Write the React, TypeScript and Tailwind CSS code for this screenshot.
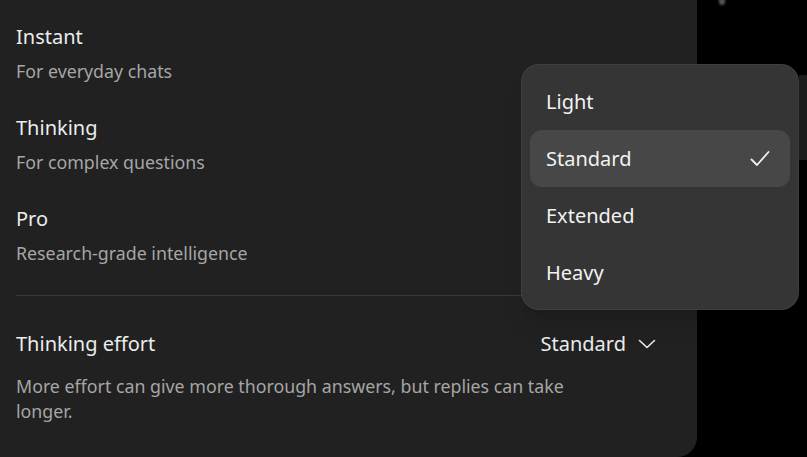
import React from "react";

const rows = [
  { title: "Instant", sub: "For everyday chats" },
  { title: "Thinking", sub: "For complex questions" },
  { title: "Pro", sub: "Research-grade intelligence" },
];

const items = ["Light", "Standard", "Extended", "Heavy"];

export default function App() {
  return (
    <div
      className="relative h-[457px] w-[807px] overflow-hidden bg-black"
      style={{ fontFamily: '"Noto Sans", "Open Sans", sans-serif' }}
    >
      <div className="absolute left-[719px] top-[-2px] h-[7px] w-[6px] rounded-b-full bg-[#555] blur-[1px]" />
      <div className="absolute left-[799px] top-[75px] h-[85px] w-[8px] bg-[#1c1c1c]" />

      <div className="flex h-full w-[697px] flex-col rounded-br-[20px] bg-[#212121] pl-4 pr-[40px] pt-[23px]">
        <div className="flex flex-col gap-[31px]">
          {rows.map((r) => (
            <div key={r.title} className="flex flex-col">
              <div className="text-[20px] leading-[28px] text-[#ececec]">{r.title}</div>
              <div className="mt-2 text-[17.8px] leading-[24px] text-[#a6a6a6]">{r.sub}</div>
            </div>
          ))}
        </div>
        <div className="mt-[30px] mr-[-24px] h-px bg-[#3a3a3a]" />
        <div className="mt-[34px] flex items-center justify-between">
          <div className="text-[20px] leading-[28px] text-[#ececec]">Thinking effort</div>
          <div className="flex items-center gap-[11px] text-[20px] leading-[28px] text-[#ececec]">
            <span>Standard</span>
            <svg width="20" height="20" viewBox="0 0 20 20" fill="none">
              <polyline
                points="2.5,6.5 10,13.5 17.5,6.5"
                stroke="#ececec"
                strokeWidth="1.6"
                strokeLinecap="round"
                strokeLinejoin="round"
              />
            </svg>
          </div>
        </div>
        <div className="mt-[16px] max-w-[580px] text-[17.8px] leading-[25px] text-[#a6a6a6]">
          More effort can give more thorough answers, but replies can take longer.
        </div>
      </div>

      <div className="absolute left-[521px] top-[64px] w-[278px] rounded-[18px] border border-white/5 bg-[#353535] p-2 shadow-xl">
        {items.map((it) => (
          <div
            key={it}
            className={`flex h-[57px] items-center justify-between rounded-[12px] pl-4 pr-5 text-[20px] text-[#f2f2f2] ${
              it === "Standard" ? "bg-[#474747]" : ""
            }`}
          >
            <span>{it}</span>
            {it === "Standard" && (
              <svg width="20" height="20" viewBox="0 0 20 20" fill="none">
                <polyline
                  points="1.5,10.5 7,16 18.5,3"
                  stroke="#f2f2f2"
                  strokeWidth="1.8"
                  strokeLinecap="round"
                  strokeLinejoin="round"
                />
              </svg>
            )}
          </div>
        ))}
      </div>
    </div>
  );
}
